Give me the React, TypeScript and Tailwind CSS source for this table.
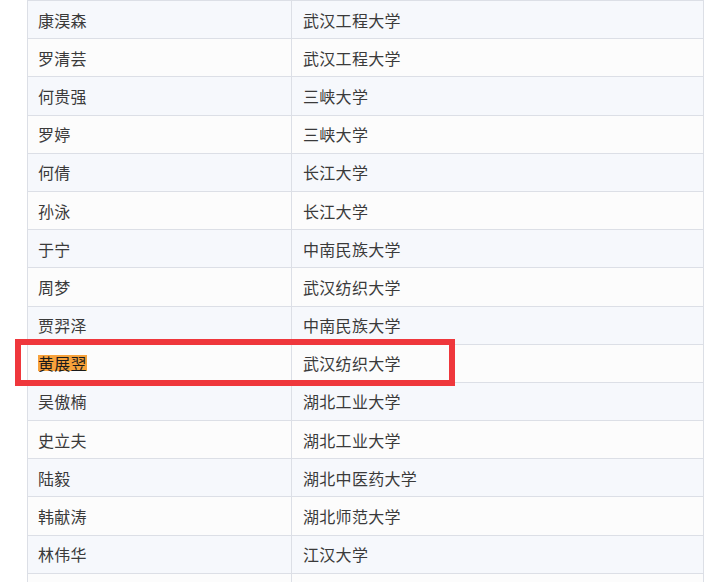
import React from 'react';

const rows: [string, string][] = [
  ['康淏森', '武汉工程大学'],
  ['罗清芸', '武汉工程大学'],
  ['何贵强', '三峡大学'],
  ['罗婷', '三峡大学'],
  ['何倩', '长江大学'],
  ['孙泳', '长江大学'],
  ['于宁', '中南民族大学'],
  ['周梦', '武汉纺织大学'],
  ['贾羿泽', '中南民族大学'],
  ['黄展翌', '武汉纺织大学'],
  ['吴傲楠', '湖北工业大学'],
  ['史立夫', '湖北工业大学'],
  ['陆毅', '湖北中医药大学'],
  ['韩献涛', '湖北师范大学'],
  ['林伟华', '江汉大学'],
  ['', ''],
];

export default function App() {
  return (
    <div
      className="relative w-[720px] h-[582px] overflow-hidden bg-white"
      style={{ fontFamily: '"Noto Sans CJK SC", "Noto Sans", sans-serif' }}
    >
      <div className="ml-[27px] w-[677px] border-l border-r border-t border-[#dcdfe6] text-[16px] tracking-[0.3px] text-[#3a3a3a]">
        {rows.map(([name, school], i) => (
          <div
            key={i}
            className={`flex h-[38.2px] border-b border-[#dcdfe6] ${
              i % 2 === 0 ? 'bg-[#f6f8fc]' : 'bg-[#fcfcfc]'
            }`}
          >
            <div className="w-[264px] flex items-center pl-[10px] border-r border-[#dcdfe6]">
              {i === 9 ? (
                <span className="bg-[#f7a23c] text-[#1a1a1a] leading-[16px]">{name}</span>
              ) : (
                name
              )}
            </div>
            <div className="flex-1 flex items-center pl-[11px]">{school}</div>
          </div>
        ))}
      </div>
      {/* annotation box */}
      <div className="absolute left-[15px] top-[339px] w-[440px] h-[47px] border-[6px] border-[#ef373c]" />
    </div>
  );
}
